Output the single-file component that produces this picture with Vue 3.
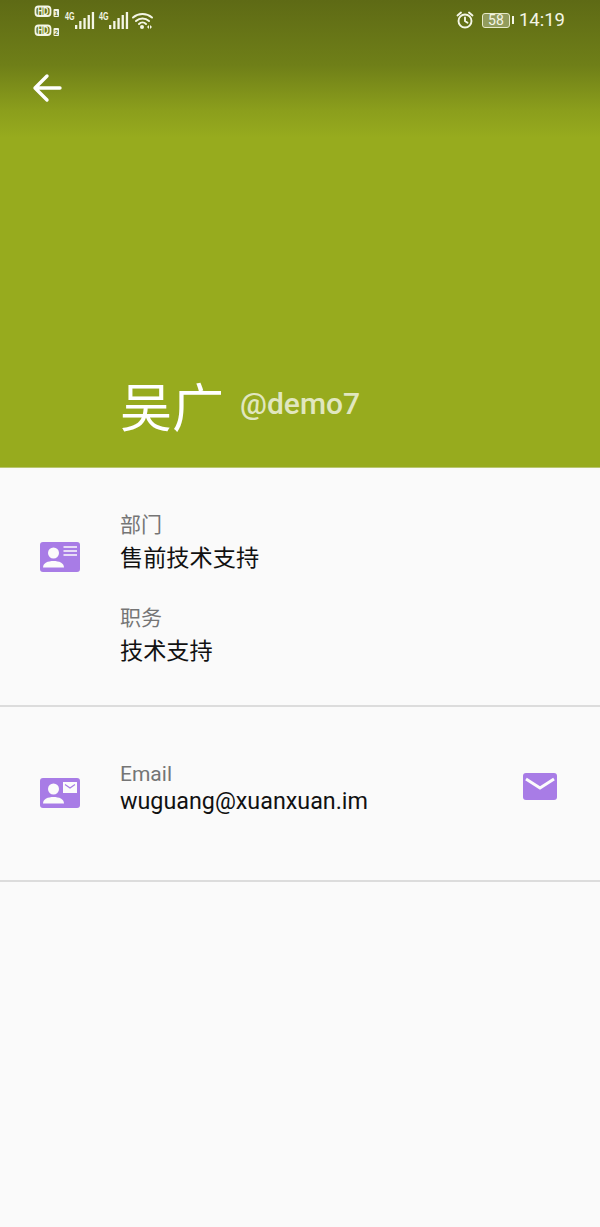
<script setup>
const fields = [
  { label: '部门', value: '售前技术支持' },
  { label: '职务', value: '技术支持' }
]
const bars = [
  { x: 0, h: 4 }, { x: 4.2, h: 8 }, { x: 8.4, h: 11 }, { x: 12.6, h: 14 }, { x: 16.8, h: 17 }
]
</script>

<template>
  <div class="page">
    <header class="hero">
      <div class="status">
        <svg class="status-left" width="160" height="40" viewBox="0 0 160 40">
          <g fill="none" stroke="#f4f6e6" stroke-width="1.800">
            <rect x="35.500" y="6.500" width="15" height="9.500" rx="3"/>
            <rect x="35.500" y="25.500" width="15" height="9.500" rx="3"/>
          </g>
          <text x="43" y="14.800" class="hd" textLength="11" lengthAdjust="spacingAndGlyphs">HD</text>
          <text x="43" y="33.800" class="hd" textLength="11" lengthAdjust="spacingAndGlyphs">HD</text>
          <rect x="53.500" y="9" width="5.500" height="8" rx="1" fill="#f4f6e6"/>
          <rect x="53.500" y="28" width="5.500" height="8" rx="1" fill="#f4f6e6"/>
          <text x="56.200" y="15.500" class="sim">1</text>
          <text x="56.200" y="34.500" class="sim">2</text>
          <text x="65" y="20" class="g4" textLength="9.500" lengthAdjust="spacingAndGlyphs">4G</text>
          <text x="99" y="20" class="g4" textLength="9.500" lengthAdjust="spacingAndGlyphs">4G</text>
          <g fill="#f4f6e6">
            <rect v-for="b in bars" :key="'a' + b.x" :x="75 + b.x" :y="29 - b.h" width="2.300" :height="b.h"/>
            <rect v-for="b in bars" :key="'b' + b.x" :x="109 + b.x" :y="29 - b.h" width="2.300" :height="b.h"/>
          </g>
          <g fill="none" stroke="#f4f6e6" stroke-width="2" stroke-linecap="round">
            <path d="M133 17.500a15 15 0 0 1 19 0"/>
            <path d="M136 21a10 10 0 0 1 13 0"/>
            <path d="M139 24a5 5 0 0 1 7 0"/>
          </g>
          <circle cx="142" cy="27" r="2" fill="#f4f6e6"/>
          <path d="M147 27l2-2v4zM150 25l2 2-2 2z" fill="#f4f6e6"/>
        </svg>
        <div class="status-right">
          <svg width="20" height="20" viewBox="0 0 20 20" fill="none" stroke="#f4f6e6" stroke-width="1.900">
            <circle cx="10" cy="11" r="6.500"/>
            <path d="M10 7.500V11l2.500 1.800M2.500 5.500L6 2.500M17.500 5.500L14 2.500" stroke-linecap="round"/>
          </svg>
          <div class="battery"><span class="battery-body">58</span><span class="battery-tip"></span></div>
          <span class="clock">14:19</span>
        </div>
      </div>
      <svg class="back" width="30" height="30" viewBox="0 0 30 30" fill="none" stroke="#fff" stroke-width="3.400" stroke-linecap="round" stroke-linejoin="round">
        <path d="M28 15H3M15 3L3 15l12 12"/>
      </svg>
      <div class="identity">
        <span class="name">吴广</span>
        <span class="account">@demo7</span>
      </div>
    </header>

    <section class="group org">
      <svg class="id-icon" width="40" height="32" viewBox="0 0 40 32">
        <rect width="40" height="30" y="1" rx="3" fill="#a87ce6"/>
        <circle cx="13.500" cy="12" r="5.500" fill="#fbfbfb"/>
        <path d="M3 26.500c0-4.500 5-6.500 10.500-6.500s10.500 2 10.500 6.500z" fill="#fbfbfb"/>
        <path d="M23.500 6h13.500M23.500 10h13.500M23.500 14h13.500" stroke="#fbfbfb" stroke-width="1.700"/>
      </svg>
      <div class="fields">
        <div v-for="item in fields" :key="item.label" class="field">
          <div class="label">{{ item.label }}</div>
          <div class="value">{{ item.value }}</div>
        </div>
      </div>
    </section>

    <section class="group mail">
      <svg class="id-icon shifted" width="40" height="32" viewBox="0 0 40 32">
        <rect width="40" height="30" y="1" rx="3" fill="#a87ce6"/>
        <circle cx="13.500" cy="12" r="5.500" fill="#fbfbfb"/>
        <path d="M3 26.500c0-4.500 5-6.500 10.500-6.500s10.500 2 10.500 6.500z" fill="#fbfbfb"/>
        <rect x="23" y="5" width="14" height="11" fill="#fbfbfb"/>
        <path d="M25 7.500l5 3.500 5-3.500" fill="none" stroke="#a87ce6" stroke-width="1.300"/>
      </svg>
      <div class="field email">
        <div class="label latin">Email</div>
        <div class="value latin">wuguang@xuanxuan.im</div>
      </div>
      <svg class="send" width="34" height="28" viewBox="0 0 34 28">
        <rect width="34" height="27" rx="3" fill="#a87ce6"/>
        <path d="M3 6l14 9 14-9" fill="none" stroke="#fbfbfb" stroke-width="3"/>
      </svg>
    </section>
  </div>
</template>

<style>
html, body { margin: 0; background: #fafafa; }
</style>

<style scoped>
.page {
  width: 600px;
  height: 1227px;
  background: #fafafa;
  font-family: Roboto, "Noto Sans CJK SC", sans-serif;
  overflow: hidden;
}
.hero {
  height: 468px;
  box-sizing: border-box;
  border-bottom: 1px solid #b9c670;
  background: linear-gradient(180deg, #5e6a15 0, #6f7f18 65px, #8b9e1c 110px, #97ab1e 138px, #97ab1e 100%);
  display: flex;
  flex-direction: column;
}
.status {
  height: 40px;
  display: flex;
  justify-content: space-between;
  align-items: center;
  flex: none;
}
.status-left { display: block; }
.status-right {
  display: flex;
  align-items: center;
  padding-right: 35px;
  gap: 7px;
}
.hd { font: 700 10.500px "Liberation Sans", sans-serif; fill: #f4f6e6; text-anchor: middle; }
.sim { font: 700 7px "Liberation Sans", sans-serif; fill: #67741a; text-anchor: middle; }
.g4 { font: 700 10px "Liberation Sans", sans-serif; fill: #f4f6e6; }
.battery { display: flex; align-items: center; gap: 2px; }
.battery-body {
  width: 28px;
  height: 15px;
  box-sizing: border-box;
  border: 1px solid #e6e9c8;
  border-radius: 3px;
  background: rgba(255,255,255,.3);
  color: #f4f6e6;
  font-size: 14px;
  line-height: 13px;
  text-align: center;
}
.battery-tip { width: 2px; height: 8px; background: #f4f6e6; }
.clock { color: #f4f6e6; font-size: 18.500px; margin-left: -2px; }
.back { display: block; margin: 33px 0 0 32px; flex: none; }
.identity {
  margin-top: auto;
  margin-left: 120px;
  margin-bottom: 27px;
  display: flex;
  align-items: center;
  gap: 16px;
  height: 60px;
}
.name { color: #fff; font-size: 52px; line-height: 60px; }
.account { color: rgba(255,255,255,.72); font-size: 30px; font-weight: 500; margin-top: -14px; }
.group {
  box-sizing: border-box;
  border-bottom: 2px solid #dcdcdc;
  display: flex;
  padding-left: 40px;
}
.org { height: 239px; align-items: flex-start; padding-top: 73px; }
.mail { height: 175px; padding-right: 43px; align-items: center; }
.id-icon { flex: none; margin-right: 40px; }
.shifted { margin-top: -2px; }
.fields { display: flex; flex-direction: column; gap: 33px; margin-top: -29px; }
.label { color: #757575; font-size: 21px; line-height: 26px; }
.value { color: #111; font-size: 23.200px; line-height: 28px; margin-top: 6px; }
.email { flex: 1; margin-top: -11px; }
.value.latin { margin-top: 0; font-size: 23.300px; }
.send { flex: none; margin-top: -14px; }
</style>
